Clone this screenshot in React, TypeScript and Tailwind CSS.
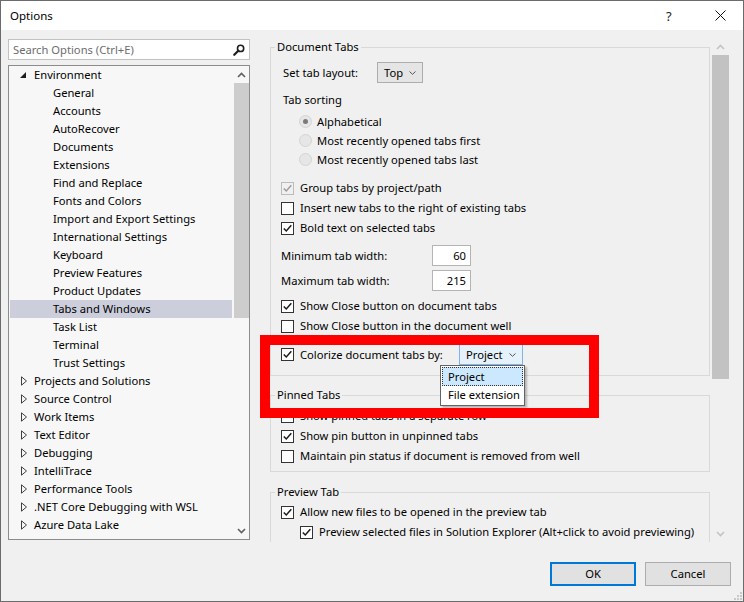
import React from "react";

type CheckProps = { checked?: boolean; disabled?: boolean };

function Check({ checked, disabled }: CheckProps) {
  return (
    <span
      className={`flex h-[13px] w-[13px] shrink-0 items-center justify-center border ${
        disabled ? "border-[#bcbcbc] bg-[#f0f0f0]" : "border-[#333333] bg-white"
      }`}
    >
      {checked && (
        <svg width="11" height="11" viewBox="0 0 11 11">
          <path
            d="M1.8 5.4 4.3 8 9.3 2.3"
            fill="none"
            stroke={disabled ? "#9d9d9d" : "#1a1a1a"}
            strokeWidth="1.5"
          />
        </svg>
      )}
    </span>
  );
}

function CheckRow({
  label,
  checked,
  disabled,
  className = "",
}: CheckProps & { label: string; className?: string }) {
  return (
    <div className={`flex h-[20px] items-center gap-[6px] ${className}`}>
      <Check checked={checked} disabled={disabled} />
      <span className="whitespace-nowrap">{label}</span>
    </div>
  );
}

function Radio({ label, selected }: { label: string; selected?: boolean }) {
  return (
    <div className="flex h-[19px] items-center gap-[5px] pl-[18px]">
      <span className="flex h-[13px] w-[13px] items-center justify-center rounded-full border border-[#d4d4d4] bg-[#e6e6e6]">
        {selected && <span className="h-[5px] w-[5px] rounded-full bg-[#7a7a7a]" />}
      </span>
      <span>{label}</span>
    </div>
  );
}

function ComboArrow() {
  return (
    <svg width="7" height="4" viewBox="0 0 7 4">
      <path d="M0.5 0.5 3.5 3.3 6.5 0.5" fill="none" stroke="#555" strokeWidth="1" />
    </svg>
  );
}

function Chevron({ up, color }: { up?: boolean; color: string }) {
  return (
    <svg width="9" height="6" viewBox="0 0 9 6">
      <path
        d={up ? "M1 5 4.5 1.5 8 5" : "M1 1 4.5 4.5 8 1"}
        fill="none"
        stroke={color}
        strokeWidth="1.6"
      />
    </svg>
  );
}

const TREE: { label: string; level: 0 | 1; open?: boolean }[] = [
  { label: "Environment", level: 0, open: true },
  { label: "General", level: 1 },
  { label: "Accounts", level: 1 },
  { label: "AutoRecover", level: 1 },
  { label: "Documents", level: 1 },
  { label: "Extensions", level: 1 },
  { label: "Find and Replace", level: 1 },
  { label: "Fonts and Colors", level: 1 },
  { label: "Import and Export Settings", level: 1 },
  { label: "International Settings", level: 1 },
  { label: "Keyboard", level: 1 },
  { label: "Preview Features", level: 1 },
  { label: "Product Updates", level: 1 },
  { label: "Tabs and Windows", level: 1 },
  { label: "Task List", level: 1 },
  { label: "Terminal", level: 1 },
  { label: "Trust Settings", level: 1 },
  { label: "Projects and Solutions", level: 0 },
  { label: "Source Control", level: 0 },
  { label: "Work Items", level: 0 },
  { label: "Text Editor", level: 0 },
  { label: "Debugging", level: 0 },
  { label: "IntelliTrace", level: 0 },
  { label: "Performance Tools", level: 0 },
  { label: ".NET Core Debugging with WSL", level: 0 },
  { label: "Azure Data Lake", level: 0 },
];

function TreeRow({ label, level, open }: { label: string; level: 0 | 1; open?: boolean }) {
  const selected = label === "Tabs and Windows";
  return (
    <div
      className={`flex h-[18px] items-center whitespace-nowrap ${selected ? "bg-[#cccedb]" : ""} ${
        level === 0 ? "pl-[10px]" : "pl-[43px]"
      }`}
    >
      {level === 0 && (
        <span className="flex w-[14px] items-center">
          {open ? (
            <svg width="6" height="6" viewBox="0 0 6 6">
              <path d="M6 0 6 6 0 6Z" fill="#1e1e1e" />
            </svg>
          ) : (
            <svg width="7" height="10" viewBox="0 0 7 10" className="ml-[1px]">
              <path d="M0.5 0.8 5.5 5 0.5 9.2Z" fill="none" stroke="#404040" strokeWidth="1" />
            </svg>
          )}
        </span>
      )}
      <span>{label}</span>
    </div>
  );
}

function Group({
  title,
  className = "",
  children,
}: {
  title: string;
  className?: string;
  children: React.ReactNode;
}) {
  return (
    <fieldset className={`w-[440px] border border-[#d9d9d9] ${className}`}>
      <legend className="ml-[4px] px-[2px] leading-[16px]">{title}</legend>
      <div className="pl-[10px]">{children}</div>
    </fieldset>
  );
}

export default function App() {
  return (
    <div className="relative flex h-[602px] w-[744px] flex-col overflow-hidden border border-[#6b6b6b] bg-[#f0f0f0] font-['Noto_Sans',sans-serif] text-[11.2px] leading-[16px] text-black">
      {/* title bar */}
      <div className="flex h-[29px] shrink-0 items-center bg-white pl-[9px]">
        <span className="flex-1 text-[11.5px]">Options</span>
        <span className="w-[49px] text-[13px] text-[#222]">?</span>
        <svg width="11" height="11" viewBox="0 0 11 11" className="mr-[17px]">
          <path d="M0.5 0.5 10.5 10.5 M10.5 0.5 0.5 10.5" stroke="#111" strokeWidth="1" />
        </svg>
      </div>

      {/* main */}
      <div className="flex pl-[7px] pt-[8px]">
        {/* left column */}
        <div className="flex w-[242px] flex-col">
          <div className="mt-[1px] flex h-[21px] items-center border border-[#c2c2c2] bg-white pl-[4px] pr-[4px]">
            <span className="flex-1 text-[#6d6d6d]">Search Options (Ctrl+E)</span>
            <svg width="12" height="12" viewBox="0 0 12 12">
              <circle cx="7.6" cy="4.4" r="3.1" fill="none" stroke="#1e1e1e" strokeWidth="1.6" />
              <path d="M5.3 6.8 1.3 10.8" stroke="#1e1e1e" strokeWidth="2.2" strokeLinecap="round" />
            </svg>
          </div>
          <div className="mt-[5px] flex h-[475px] border border-[#8c8c8c] bg-[#f7f7f7]">
            <div className="flex-1 overflow-hidden px-[1px]">
              {TREE.map((t) => (
                <TreeRow key={t.label} {...t} />
              ))}
            </div>
            <div className="flex w-[16px] flex-col items-center">
              <div className="flex h-[17px] items-center justify-center">
                <Chevron up color="#606060" />
              </div>
              <div className="h-[235px] w-[15px] bg-[#cdcdcd]" />
              <div className="flex-1" />
              <div className="flex h-[17px] items-center justify-center">
                <Chevron color="#606060" />
              </div>
            </div>
          </div>
        </div>

        {/* right column */}
        <div className="ml-[20px] flex h-[504px] w-[459px]">
          <div className="w-[442px] overflow-hidden pt-[1px]">
            <Group title="Document Tabs" className="pb-[10px]">
              <div className="mt-[7px] flex h-[21px] items-center pl-[2px]">
                <span className="w-[94px]">Set tab layout:</span>
                <div className="flex h-[21px] w-[46px] items-center justify-between border border-[#adadad] bg-[#e5e5e5] pl-[6px] pr-[6px]">
                  <span>Top</span>
                  <ComboArrow />
                </div>
              </div>
              <div className="mt-[8px] flex h-[18px] items-center pl-[2px]">Tab sorting</div>
              <div className="mt-[3px]">
                <Radio label="Alphabetical" selected />
                <Radio label="Most recently opened tabs first" />
                <Radio label="Most recently opened tabs last" />
              </div>
              <div className="mt-[9px]">
                <CheckRow label="Group tabs by project/path" checked disabled />
                <CheckRow label="Insert new tabs to the right of existing tabs" />
                <CheckRow label="Bold text on selected tabs" checked />
              </div>
              <div className="mt-[5px]">
                <div className="flex h-[25px] items-center">
                  <span className="w-[151px]">Minimum tab width:</span>
                  <div className="flex h-[21px] w-[39px] items-center justify-end border border-[#b4b4b4] bg-white pr-[4px]">
                    60
                  </div>
                </div>
                <div className="flex h-[25px] items-center">
                  <span className="w-[151px]">Maximum tab width:</span>
                  <div className="flex h-[21px] w-[39px] items-center justify-end border border-[#b4b4b4] bg-white pr-[4px]">
                    215
                  </div>
                </div>
              </div>
              <div className="mt-[3px]">
                <CheckRow label="Show Close button on document tabs" checked />
                <CheckRow label="Show Close button in the document well" />
              </div>
              <div className="mt-[8px] flex h-[21px] items-center gap-[6px]">
                <Check checked />
                <span className="w-[153px]">Colorize document tabs by:</span>
                <div className="flex h-[21px] w-[64px] items-center justify-between border border-[#7eb4ea] bg-[#e5f1fb] pl-[6px] pr-[6px]">
                  <span>Project</span>
                  <ComboArrow />
                </div>
              </div>
            </Group>

            <Group title="Pinned Tabs" className="mt-[11px] pb-[5px]">
              <div className="mt-[3px]">
                <CheckRow label="Show pinned tabs in a separate row" />
                <CheckRow label="Show pin button in unpinned tabs" checked />
                <CheckRow label="Maintain pin status if document is removed from well" />
              </div>
            </Group>

            <Group title="Preview Tab" className="mt-[12px] pb-[10px]">
              <div className="mt-[2px]">
                <CheckRow label="Allow new files to be opened in the preview tab" checked />
                <CheckRow
                  className="ml-[19px]"
                  label="Preview selected files in Solution Explorer (Alt+click to avoid previewing)"
                  checked
                />
              </div>
            </Group>
          </div>

          {/* scrollbar */}
          <div className="flex w-[17px] flex-col">
            <div className="flex h-[17px] items-center justify-center">
              <Chevron up color="#c4c4c4" />
            </div>
            <div className="h-[324px] bg-[#c2c2c2]" />
            <div className="flex-1" />
            <div className="flex h-[17px] items-center justify-center">
              <Chevron color="#c4c4c4" />
            </div>
          </div>
        </div>
      </div>

      {/* buttons */}
      <div className="mt-[20px] flex justify-end gap-[9px] pr-[12px]">
        <button className="flex h-[24px] w-[86px] items-center justify-center border-2 border-[#0078d7] bg-[#e1e1e1]">
          OK
        </button>
        <button className="flex h-[24px] w-[86px] items-center justify-center border border-[#adadad] bg-[#e1e1e1]">
          Cancel
        </button>
      </div>

      {/* resize grip */}
      <svg width="8" height="8" viewBox="0 0 8 8" className="absolute bottom-[1px] right-[1px]">
        <rect x="6" y="0" width="2" height="2" fill="#c8c8c8" />
        <rect x="3" y="3" width="2" height="2" fill="#c8c8c8" />
        <rect x="6" y="3" width="2" height="2" fill="#c8c8c8" />
        <rect x="0" y="6" width="2" height="2" fill="#c8c8c8" />
        <rect x="3" y="6" width="2" height="2" fill="#c8c8c8" />
        <rect x="6" y="6" width="2" height="2" fill="#c8c8c8" />
      </svg>

      {/* open dropdown list */}
      <div className="absolute left-[439px] top-[364px] w-[85px] border border-[#646464] bg-white p-[1px] shadow-[2px_2px_2px_rgba(0,0,0,0.25)]">
        <div className="flex h-[19px] items-center border border-dotted border-[#333] bg-[#cce8ff] pl-[5px]">
          Project
        </div>
        <div className="flex h-[18px] items-center pl-[6px]">File extension</div>
      </div>

      {/* annotation */}
      <div className="absolute left-[259px] top-[334px] h-[83px] w-[339px] border-[10px] border-[#ff0000]" />
    </div>
  );
}
